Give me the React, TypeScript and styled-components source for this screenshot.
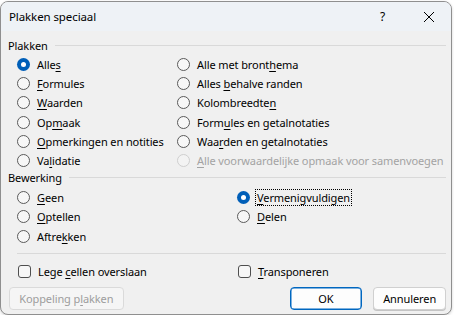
import React from "react";
import styled, { createGlobalStyle } from "styled-components";

const Global = createGlobalStyle`
  html, body { margin: 0; padding: 0; }
  body {
    background: #ffffff;
    font-family: "Noto Sans", "Liberation Sans", sans-serif;
    font-size: 11px;
    letter-spacing: -0.1px;
    color: #000;
  }
`;

const Dialog = styled.div`
  margin-top: 1px;
  width: 452px;
  height: 314px;
  box-sizing: border-box;
  border: 1px solid #8f8f8f;
  border-radius: 8px;
  background: #f0f0f0;
  overflow: hidden;
  display: flex;
  flex-direction: column;
  box-shadow: 0 1px 3px rgba(0, 0, 0, 0.18);
`;

const TitleBar = styled.div`
  height: 29px;
  background: #eef2f6;
  display: flex;
  align-items: center;
  padding-left: 8px;
  font-size: 11.5px;
`;

const Title = styled.div`
  flex: 1;
`;

const TitleButton = styled.div`
  width: 45px;
  height: 29px;
  display: flex;
  align-items: center;
  justify-content: center;
  margin-left: 1px;
  font-size: 12px;
`;

const Body = styled.div`
  flex: 1;
  display: flex;
  flex-direction: column;
  padding: 0 5px 0 7px;
`;

const SectionHeader = styled.div<{ $top: number }>`
  display: flex;
  align-items: center;
  gap: 7px;
  height: 16px;
  margin-top: ${(p) => p.$top}px;
  &::after {
    content: "";
    flex: 1;
    height: 1px;
    background: #d9d9d9;
  }
`;

const Grid = styled.div<{ $col: number; $top: number; $rows: number }>`
  display: grid;
  grid-template-columns: ${(p) => p.$col}px 1fr;
  grid-auto-flow: column;
  grid-template-rows: repeat(${(p) => p.$rows}, 19.2px);
  padding-left: 9px;
  margin-top: ${(p) => p.$top}px;
`;

const Option = styled.div<{ $disabled?: boolean }>`
  display: flex;
  align-items: center;
  gap: 7px;
  white-space: nowrap;
  color: ${(p) => (p.$disabled ? "#a3a3a3" : "#000")};
`;

const Radio = styled.span<{ $checked?: boolean; $disabled?: boolean }>`
  width: 13px;
  height: 13px;
  box-sizing: border-box;
  border-radius: 50%;
  flex: none;
  border: ${(p) =>
    p.$checked ? "none" : `1px solid ${p.$disabled ? "#cfcfcf" : "#5a5a5a"}`};
  background: ${(p) => (p.$checked ? "#005fb8" : p.$disabled ? "#f3f3f3" : "#f7f7f7")};
  display: flex;
  align-items: center;
  justify-content: center;
  &::after {
    content: "";
    display: ${(p) => (p.$checked ? "block" : "none")};
    width: 5px;
    height: 5px;
    border-radius: 50%;
    background: #fff;
  }
`;

const Focus = styled.span`
  outline: 1px dotted #000;
  outline-offset: 0px;
  padding: 0 1px;
  margin-left: -1px;
`;

const Separator = styled.div`
  height: 1px;
  background: #d9d9d9;
  margin: 7px 0 0 9px;
`;

const CheckRow = styled.div`
  display: grid;
  grid-template-columns: 220px 1fr;
  padding-left: 10px;
  margin-top: 9px;
  height: 18px;
  align-items: center;
`;

const Check = styled.span`
  width: 13px;
  height: 13px;
  box-sizing: border-box;
  border: 1px solid #4f4f4f;
  border-radius: 3px;
  background: #f7f7f7;
  flex: none;
`;

const ButtonRow = styled.div`
  display: flex;
  align-items: center;
  margin-top: 6px;
`;

const Button = styled.button<{ $primary?: boolean; $width: number; $ml?: number }>`
  width: ${(p) => p.$width}px;
  height: 23px;
  margin-left: ${(p) => p.$ml ?? 0}px;
  box-sizing: border-box;
  font-family: inherit;
  font-size: 11px;
  letter-spacing: -0.1px;
  padding: 0;
  border-radius: 4px;
  color: #000;
  background: #fdfdfd;
  border: 1px solid ${(p) => (p.$primary ? "#0067c0" : "#d0d0d0")};
  box-shadow: ${(p) => (p.$primary ? "inset 0 0 0 0.5px #0067c0" : "0 1px 0 #c4c4c4")};
  &:disabled {
    color: #9d9d9d;
    background: #f5f5f5;
    border-color: #dadada;
    box-shadow: none;
  }
`;

const U = styled.u`
  text-underline-offset: 2px;
`;

function XIcon() {
  return (
    <svg width="12" height="12" viewBox="0 0 12 12">
      <path d="M1 1L11 11M11 1L1 11" stroke="#000" strokeWidth="1" />
    </svg>
  );
}

export default function App() {
  return (
    <>
      <Global />
      <Dialog>
        <TitleBar>
          <Title>Plakken speciaal</Title>
          <TitleButton>?</TitleButton>
          <TitleButton>
            <XIcon />
          </TitleButton>
        </TitleBar>
        <Body>
          <SectionHeader $top={6}>Plakken</SectionHeader>
          <Grid $col={160} $top={2} $rows={6}>
            <Option><Radio $checked /><span>Alle<U>s</U></span></Option>
            <Option><Radio /><span><U>F</U>ormules</span></Option>
            <Option><Radio /><span><U>W</U>aarden</span></Option>
            <Option><Radio /><span>Op<U>m</U>aak</span></Option>
            <Option><Radio /><span><U>O</U>pmerkingen en notities</span></Option>
            <Option><Radio /><span>Va<U>l</U>idatie</span></Option>
            <Option><Radio /><span>Alle met bront<U>h</U>ema</span></Option>
            <Option><Radio /><span>Alles <U>b</U>ehalve randen</span></Option>
            <Option><Radio /><span>Kolombreedte<U>n</U></span></Option>
            <Option><Radio /><span>Form<U>u</U>les en getalnotaties</span></Option>
            <Option><Radio /><span>Waa<U>r</U>den en getalnotaties</span></Option>
            <Option $disabled><Radio $disabled /><span><U>A</U>lle voorwaardelijke opmaak voor samenvoegen</span></Option>
          </Grid>
          <SectionHeader $top={-1}>Bewerking</SectionHeader>
          <Grid $col={220} $top={3} $rows={3}>
            <Option><Radio /><span><U>G</U>een</span></Option>
            <Option><Radio /><span><U>O</U>ptellen</span></Option>
            <Option><Radio /><span>Aftre<U>k</U>ken</span></Option>
            <Option><Radio $checked /><Focus><U>V</U>ermenigvuldigen</Focus></Option>
            <Option><Radio /><span><U>D</U>elen</span></Option>
          </Grid>
          <Separator />
          <CheckRow>
            <Option><Check /><span>Lege <U>c</U>ellen overslaan</span></Option>
            <Option><Check /><span><U>T</U>ransponeren</span></Option>
          </CheckRow>
          <ButtonRow>
            <Button disabled $width={115} $ml={1}>Koppeling p<U>l</U>akken</Button>
            <Button $primary $width={73} $ml={166}>OK</Button>
            <Button $width={73} $ml={11}>Annuleren</Button>
          </ButtonRow>
        </Body>
      </Dialog>
    </>
  );
}
